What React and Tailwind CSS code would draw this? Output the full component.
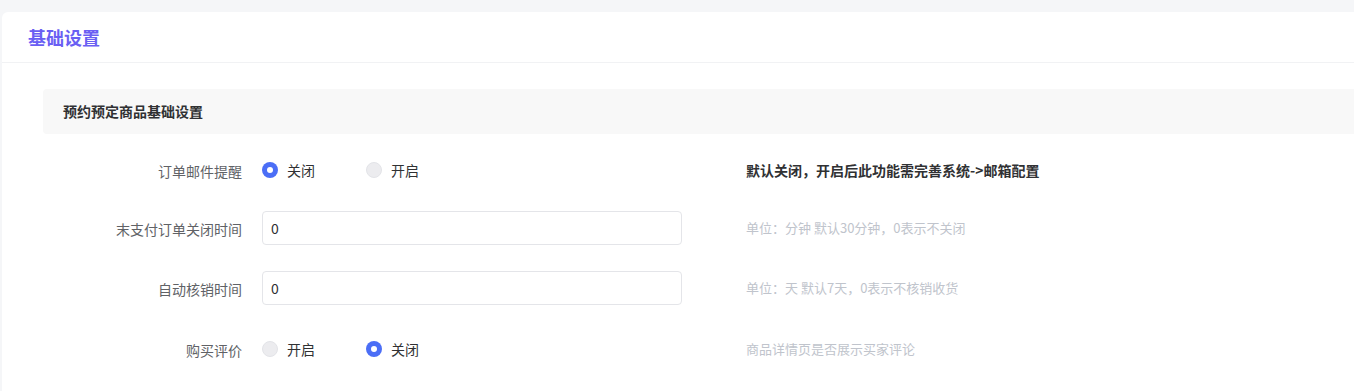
import React from "react";

const font = { fontFamily: '"Noto Sans CJK SC", "Noto Sans", sans-serif' };

function Radio({ checked, label }) {
  return (
    <div className="flex items-center w-[104px]">
      {checked ? (
        <span className="w-4 h-4 rounded-full bg-[#4b6ef6] flex items-center justify-center">
          <span className="w-[6px] h-[6px] rounded-full bg-white" />
        </span>
      ) : (
        <span className="w-4 h-4 rounded-full bg-[#ececef] border border-[#e3e4e8]" />
      )}
      <span className="ml-[9px] text-[14px] leading-none text-[#303133]">{label}</span>
    </div>
  );
}

function Row({ label, children, desc, strong, className }) {
  return (
    <div className={"flex items-center h-[34px] " + (className || "")}>
      <div className="w-[199px] text-right text-[14px] text-[#606266] pt-[3px]">{label}</div>
      <div className="ml-[20px] w-[420px] flex items-center">{children}</div>
      <div
        className={
          "ml-[64px] " +
          (strong
            ? "text-[14px] font-bold text-[#303133]"
            : "text-[13px] text-[#c0c4cc]")
        }
      >
        {desc}
      </div>
    </div>
  );
}

export default function App() {
  return (
    <div className="min-h-[391px] bg-[#f5f6f8] pt-[12px] pl-[2px]" style={font}>
      <div className="bg-white rounded-tl-[6px] min-h-[379px]">
        <div className="h-[51px] flex items-center pl-[26px] border-b border-[#f1f2f4]">
          <h1 className="text-[18px] font-bold text-[#6a5ff3] leading-none">基础设置</h1>
        </div>
        <div className="pl-[41px] pt-[26px]">
          <div className="h-[45px] bg-[#f8f8f8] rounded-l-[4px] flex items-center pl-[20px]">
            <span className="text-[14px] font-bold text-[#303133]">预约预定商品基础设置</span>
          </div>
          <div className="pt-[19px]">
            <Row label="订单邮件提醒" desc="默认关闭，开启后此功能需完善系统->邮箱配置" strong className="mb-[24px]">
              <Radio checked label="关闭" />
              <Radio label="开启" />
            </Row>
            <Row label="末支付订单关闭时间" desc="单位：分钟 默认30分钟，0表示不关闭" className="mb-[26px]">
              <input
                defaultValue="0"
                className="w-[420px] h-[34px] border border-[#e4e5e9] rounded-[4px] pl-[8px] text-[14px] text-[#303133] outline-none"
              />
            </Row>
            <Row label="自动核销时间" desc="单位：天 默认7天，0表示不核销收货" className="mb-[27px]">
              <input
                defaultValue="0"
                className="w-[420px] h-[34px] border border-[#e4e5e9] rounded-[4px] pl-[8px] text-[14px] text-[#303133] outline-none"
              />
            </Row>
            <Row label="购买评价" desc="商品详情页是否展示买家评论">
              <Radio label="开启" />
              <Radio checked label="关闭" />
            </Row>
          </div>
        </div>
      </div>
    </div>
  );
}
